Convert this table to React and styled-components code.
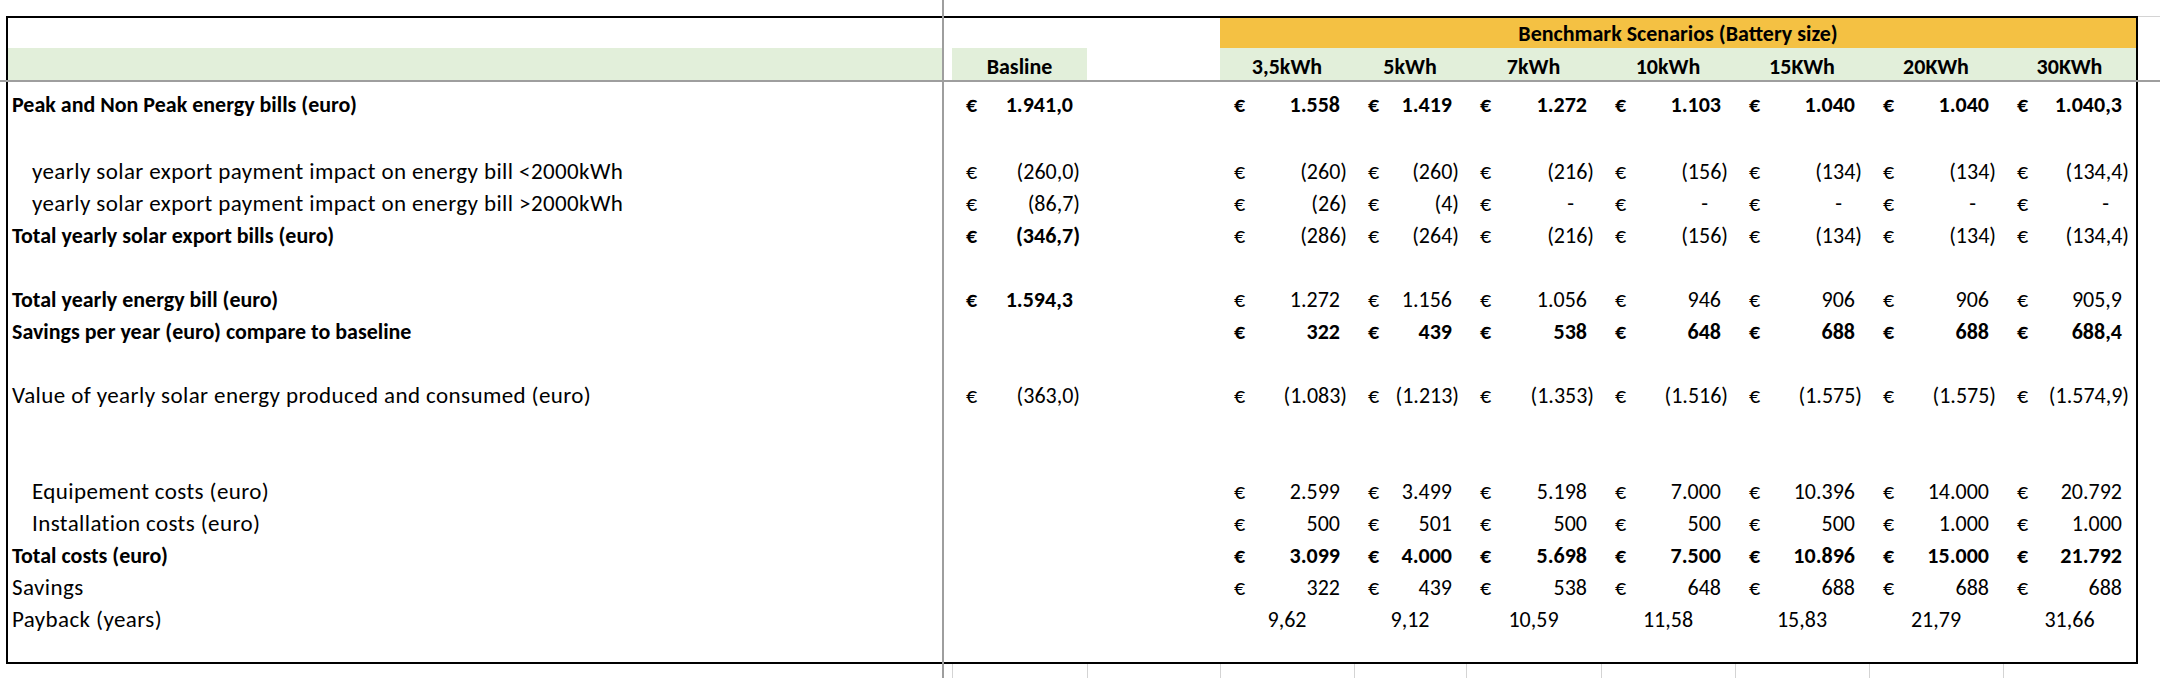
import React from "react";
import styled, { createGlobalStyle } from "styled-components";

const GlobalStyle = createGlobalStyle`
  html, body {
    margin: 0;
    padding: 0;
    background: #ffffff;
  }
  body {
    font-family: Carlito, Calibri, "Liberation Sans Narrow", "Open Sans", sans-serif;
    font-size: 22px;
    color: #000000;
  }
`;

// label | gap | baseline | empty | 7 scenarios
const COLS = "934px 10px 135px 133px 134px 112px 135px 134px 134px 134px 133px";

const SCENARIOS = ["3,5kWh", "5kWh", "7kWh", "10kWh", "15KWh", "20KWh", "30KWh"];

const ROWS = [
  {
    label: "Peak and Non Peak energy bills (euro)",
    bold: true,
    base: "1.941,0",
    baseBold: true,
    vals: ["1.558", "1.419", "1.272", "1.103", "1.040", "1.040", "1.040,3"],
    valsBold: true,
  },
  { blank: true, h: 35 },
  {
    label: "yearly solar export payment impact on energy bill <2000kWh",
    indent: true,
    base: "(260,0)",
    vals: ["(260)", "(260)", "(216)", "(156)", "(134)", "(134)", "(134,4)"],
  },
  {
    label: "yearly solar export payment impact on energy bill >2000kWh",
    indent: true,
    base: "(86,7)",
    vals: ["(26)", "(4)", "-", "-", "-", "-", "-"],
  },
  {
    label: "Total yearly solar export bills (euro)",
    bold: true,
    base: "(346,7)",
    baseBold: true,
    vals: ["(286)", "(264)", "(216)", "(156)", "(134)", "(134)", "(134,4)"],
  },
  { blank: true },
  {
    label: "Total yearly energy bill (euro)",
    bold: true,
    base: "1.594,3",
    baseBold: true,
    vals: ["1.272", "1.156", "1.056", "946", "906", "906", "905,9"],
  },
  {
    label: "Savings per year (euro) compare to baseline",
    bold: true,
    vals: ["322", "439", "538", "648", "688", "688", "688,4"],
    valsBold: true,
  },
  { blank: true },
  {
    label: "Value of yearly solar energy produced and consumed (euro)",
    base: "(363,0)",
    vals: ["(1.083)", "(1.213)", "(1.353)", "(1.516)", "(1.575)", "(1.575)", "(1.574,9)"],
  },
  { blank: true },
  { blank: true },
  {
    label: "Equipement costs (euro)",
    indent: true,
    vals: ["2.599", "3.499", "5.198", "7.000", "10.396", "14.000", "20.792"],
  },
  {
    label: "Installation costs (euro)",
    indent: true,
    vals: ["500", "501", "500", "500", "500", "1.000", "1.000"],
  },
  {
    label: "Total costs (euro)",
    bold: true,
    vals: ["3.099", "4.000", "5.698", "7.500", "10.896", "15.000", "21.792"],
    valsBold: true,
  },
  {
    label: "Savings",
    vals: ["322", "439", "538", "648", "688", "688", "688"],
  },
  {
    label: "Payback (years)",
    plain: ["9,62", "9,12", "10,59", "11,58", "15,83", "21,79", "31,66"],
  },
  { blank: true, h: 27 },
];

const Page = styled.div`
  position: relative;
  width: 2160px;
  height: 678px;
  padding-top: 16px;
  padding-left: 6px;
  box-sizing: border-box;
  overflow: hidden;
`;

const SheetLine = styled.div`
  display: flex;
  align-items: flex-start;
`;

const Sheet = styled.div`
  width: 2132px;
  box-sizing: border-box;
  border: 2px solid #000000;
`;

const Tail = styled.div`
  flex: 1;
  border-top: 1px solid #d4d4d4;
`;

const Row = styled.div`
  display: grid;
  grid-template-columns: ${COLS};
  height: ${(p) => p.$h || 32}px;
`;

const Spacer = styled.div`
  height: ${(p) => p.$h}px;
`;

const Banner = styled.div`
  grid-column: 5 / -1;
  background: #f4c143;
  font-weight: 700;
  display: flex;
  align-items: center;
  justify-content: center;
  padding-top: 1px;
`;

const HeadCell = styled.div`
  background: ${(p) => (p.$green ? "#e2efda" : "transparent")};
  font-weight: 700;
  display: flex;
  align-items: center;
  justify-content: center;
  padding-top: 5px;
`;

const Label = styled.div`
  display: flex;
  align-items: center;
  padding-left: ${(p) => (p.$indent ? 24 : 4)}px;
  padding-bottom: ${(p) => (p.$bold ? 0 : 1)}px;
  font-weight: ${(p) => (p.$bold ? 700 : 400)};
  font-size: ${(p) => (p.$bold ? 22 : 23)}px;
  letter-spacing: ${(p) => (p.$bold ? 0 : 0.4)}px;
  white-space: nowrap;
`;

const Amount = styled.div`
  display: flex;
  align-items: center;
  justify-content: space-between;
  padding: 0 7px 0 14px;
  font-weight: ${(p) => (p.$bold ? 700 : 400)};
  white-space: nowrap;
`;

const Num = styled.span`
  padding-right: ${(p) => p.$pad}px;
`;

const Plain = styled.div`
  display: flex;
  align-items: center;
  justify-content: center;
`;

const Empty = styled.div``;

const Stubs = styled.div`
  display: grid;
  grid-template-columns: ${COLS};
  height: 14px;
  margin-left: 2px;
`;

const Stub = styled.div`
  border-left: ${(p) => (p.$line ? "1px solid #d4d4d4" : "none")};
`;

const FreezeV = styled.div`
  position: absolute;
  top: 0;
  left: 942px;
  width: 2px;
  height: 678px;
  background: #9e9e9e;
`;

const FreezeH = styled.div`
  position: absolute;
  top: 80px;
  left: 0;
  width: 2160px;
  height: 2px;
  background: #9e9e9e;
`;

const padFor = (v) => {
  if (v === "-") return 20;
  return v.endsWith(")") ? 0 : 7;
};

const Money = ({ value, bold }) => (
  <Amount $bold={bold}>
    <span>€</span>
    <Num $pad={padFor(value)}>{value}</Num>
  </Amount>
);

const DataRow = ({ row }) => {
  if (row.blank) return <Spacer $h={row.h || 32} />;
  return (
    <Row>
      <Label $bold={row.bold} $indent={row.indent}>
        {row.label}
      </Label>
      <Empty />
      {row.base ? <Money value={row.base} bold={row.baseBold} /> : <Empty />}
      <Empty />
      {row.vals &&
        row.vals.map((v, i) => <Money key={i} value={v} bold={row.valsBold} />)}
      {row.plain && row.plain.map((v, i) => <Plain key={i}>{v}</Plain>)}
    </Row>
  );
};

const App = () => {
  return (
    <>
      <GlobalStyle />
      <Page>
        <SheetLine>
          <Sheet>
            <Row $h={30}>
              <Empty />
              <Empty />
              <Empty />
              <Empty />
              <Banner>Benchmark Scenarios (Battery size)</Banner>
            </Row>
            <Row>
              <HeadCell $green />
              <Empty />
              <HeadCell $green>Basline</HeadCell>
              <Empty />
              {SCENARIOS.map((s) => (
                <HeadCell $green key={s}>
                  {s}
                </HeadCell>
              ))}
            </Row>
            <Spacer $h={8} />
            {ROWS.map((r, i) => (
              <DataRow key={i} row={r} />
            ))}
          </Sheet>
          <Tail />
        </SheetLine>
        <Stubs>
          <Stub />
          <Stub />
          {Array.from({ length: 9 }).map((_, i) => (
            <Stub key={i} $line />
          ))}
        </Stubs>
        <FreezeV />
        <FreezeH />
      </Page>
    </>
  );
};

export default App;
